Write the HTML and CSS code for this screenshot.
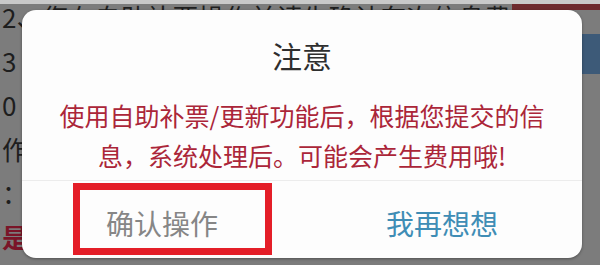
FILE: index.html
```html
<!DOCTYPE html>
<html lang="zh-CN">
<head>
  <meta charset="UTF-8">
  <title>注意</title>
  <link rel="stylesheet" href="styles.css">
</head>
<body>
  <div class="screen">
    <div class="page">
      <div class="row"><span class="line">2、您在自助补票操作前请先确认车次信息费用！</span><i class="tag red"></i></div>
      <div class="row"><span class="line">3</span><i class="tag blue"></i></div>
      <div class="row"><span class="line">0</span></div>
      <div class="row"><span class="line">作</span></div>
      <div class="row"><span class="line">：</span></div>
      <div class="row hot"><span class="line">是</span></div>
    </div>

    <div class="dialog">
      <h2 class="title">注意</h2>
      <p class="msg">使用自助补票/更新功能后，根据您提交的信<br>息，系统处理后。可能会产生费用哦!</p>
      <div class="actions">
        <button class="btn ok">确认操作</button>
        <button class="btn cancel">我再想想</button>
      </div>
      <div class="mark"></div>
    </div>
  </div>
</body>
</html>
```

FILE: styles.css
```css
body {
  margin: 0;
  font-family: "Noto Sans CJK SC", "Noto Sans", sans-serif;
}
.screen {
  position: relative;
  width: 600px;
  height: 265px;
  overflow: hidden;
  background: #7c7c7c;
}
.page {
  padding: 0 0 0 2px;
  border-top: 4px solid #c9c9c9;
}
.row {
  display: flex;
  height: 44px;
  line-height: 26px;
  font-size: 26px;
  color: #1e1e1e;
  white-space: nowrap;
}
.row.hot {
  color: #7a1528;
  font-weight: bold;
}
.line {
  flex: 1;
  min-width: 0;
  overflow: hidden;
}
.tag {
  flex-shrink: 0;
  width: 88px;
  height: 6px;
}
.tag.red {
  background: #6e2a2e;
}
.tag.blue {
  margin-top: -14px;
  width: 18px;
  height: 40px;
  background: #3d5a78;
}
.dialog {
  position: absolute;
  left: 22px;
  top: 10px;
  width: 560px;
  height: 248px;
  background: #fdfdfd;
  border-radius: 14px;
  box-shadow: 0 1px 3px rgba(0, 0, 0, 0.35);
  display: flex;
  flex-direction: column;
}
.title {
  margin: 25px 0 0;
  font-size: 30px;
  font-weight: normal;
  line-height: 40px;
  text-align: center;
  color: #2e2e2e;
}
.msg {
  margin: 20px 0 0;
  padding: 0 30px 5px;
  font-size: 25px;
  line-height: 40px;
  text-align: center;
  color: #ab2639;
}
.actions {
  flex: 1;
  display: flex;
  border-top: 1px solid #ececec;
}
.btn {
  flex: 1;
  padding: 6px 0 0;
  border: none;
  background: none;
  font-family: inherit;
  font-size: 28px;
}
.btn.ok {
  color: #868686;
}
.btn.cancel {
  color: #3f8db5;
}
.mark {
  position: absolute;
  left: 51px;
  top: 173px;
  width: 199px;
  height: 72px;
  box-sizing: border-box;
  border: 7px solid #e41e28;
}
```
